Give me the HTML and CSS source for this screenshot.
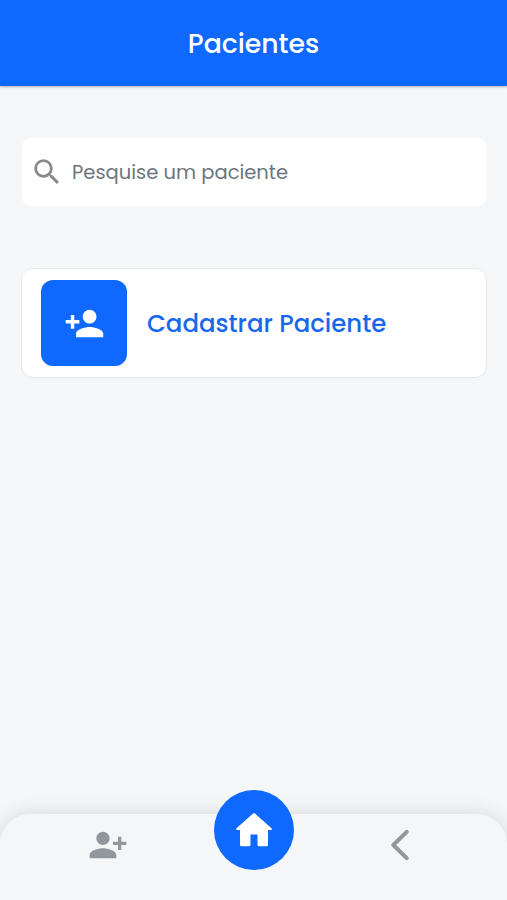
FILE: index.html
```html
<!DOCTYPE html>
<html lang="pt-BR">
<head>
    <meta charset="UTF-8">
    <meta name="viewport" content="width=device-width, initial-scale=1.0">
    <title>Pacientes</title>
    <link rel="stylesheet" href="styles.css">
</head>
<body>
    <div class="app">
        <header class="header">
            <h1>Pacientes</h1>
        </header>

        <main class="content">
            <label class="search">
                <svg class="search-icon" viewBox="0 0 24 24">
                    <path d="M15.5 14h-.79l-.28-.27A6.471 6.471 0 0 0 16 9.5 6.5 6.5 0 1 0 9.5 16c1.61 0 3.09-.59 4.23-1.57l.27.28v.79l5 4.99L20.49 19l-4.99-5zm-6 0C7.01 14 5 11.99 5 9.5S7.01 5 9.5 5 14 7.01 14 9.5 11.99 14 9.5 14z"/>
                </svg>
                <input type="text" placeholder="Pesquise um paciente">
            </label>

            <a class="card" href="#">
                <span class="card-icon">
                    <svg viewBox="0 0 24 24">
                        <path d="M15 12c2.21 0 4-1.79 4-4s-1.79-4-4-4-4 1.79-4 4 1.79 4 4 4zm-9-2V7H4v3H1v2h3v3h2v-3h3v-2H6zm9 4c-2.67 0-8 1.34-8 4v2h16v-2c0-2.66-5.33-4-8-4z"/>
                    </svg>
                </span>
                <span class="card-title">Cadastrar Paciente</span>
            </a>
        </main>

        <nav class="tabbar">
            <a class="tab" href="#">
                <svg class="tab-add" viewBox="0 0 24 24">
                    <path d="M13 8c0-2.21-1.79-4-4-4S5 5.79 5 8s1.79 4 4 4 4-1.79 4-4zm2 2v2h3v3h2v-3h3v-2h-3V7h-2v3h-3zM1 18v2h16v-2c0-2.66-5.33-4-8-4s-8 1.34-8 4z"/>
                </svg>
            </a>
            <a class="home" href="#">
                <svg viewBox="0 0 36 34">
                    <path d="M16.8.8.5 15.3c-.8.7-.5 1.7.5 1.7h3v14.8c0 .9.5 1.4 1.4 1.4h7.7c.9 0 1.4-.5 1.4-1.4V21.5h7v10.3c0 .9.5 1.4 1.4 1.4h7.7c.9 0 1.4-.5 1.4-1.4V17h3c1 0 1.3-1 .5-1.7L19.2.8c-.7-.6-1.7-.6-2.4 0z"/>
                </svg>
            </a>
            <a class="tab" href="#">
                <svg class="tab-back" viewBox="0 0 20 32">
                    <path d="M16.7 2.8 3.3 16l13.4 13.2"/>
                </svg>
            </a>
        </nav>
    </div>
</body>
</html>
```

FILE: styles.css
```css
* {
    box-sizing: border-box;
}

body {
    margin: 0;
    font-family: Poppins, Inter, "Open Sans", sans-serif;
    background: #f4f6f8;
}

a {
    text-decoration: none;
}

.app {
    display: flex;
    flex-direction: column;
    height: 100vh;
    overflow: hidden;
}

.header {
    display: flex;
    align-items: center;
    justify-content: center;
    height: 86px;
    padding-top: 2px;
    background: #0f69ff;
    box-shadow: 0 1px 2px rgba(0, 0, 0, 0.3);
}

.header h1 {
    margin: 0;
    color: #fff;
    font-size: 26.7px;
    font-weight: 500;
}

.content {
    flex: 1;
    padding: 52px 20px 0 21px;
}

.search {
    display: flex;
    align-items: center;
    gap: 8px;
    height: 68px;
    margin: 0 0 62px 1px;
    padding: 0 8px;
    background: #fff;
    border-radius: 9px;
}

.search-icon {
    flex: none;
    width: 34px;
    height: 34px;
    fill: #8a8a8a;
}

.search input {
    flex: 1;
    padding: 0;
    border: none;
    outline: none;
    background: none;
    font-family: inherit;
    font-size: 19.5px;
}

.search input::placeholder {
    color: #6c757d;
}

.card {
    display: flex;
    align-items: center;
    gap: 20px;
    height: 110px;
    padding: 0 19px;
    background: #fff;
    border: 1px solid #e6e8ea;
    border-radius: 12px;
}

.card-icon {
    display: flex;
    align-items: center;
    justify-content: center;
    width: 86px;
    height: 86px;
    background: #0f69ff;
    border-radius: 12px;
}

.card-icon svg {
    width: 41px;
    height: 41px;
    fill: #fff;
}

.card-title {
    color: #1768ec;
    font-size: 24.4px;
    font-weight: 500;
}

.tabbar {
    display: flex;
    justify-content: center;
    height: 86px;
    background: #f4f6f8;
    border-radius: 30px 30px 0 0;
    box-shadow: 0 0 20px rgba(0, 0, 0, 0.13);
}

.tab {
    display: flex;
    flex: 1;
    justify-content: center;
    height: 62px;
    align-items: center;
}

.tab-add {
    width: 40px;
    height: 40px;
    margin-left: 2px;
    fill: #92979e;
}

.tab-back {
    width: 20px;
    height: 32px;
    fill: none;
    stroke: #92979b;
    stroke-width: 4;
    stroke-linecap: round;
    stroke-linejoin: round;
}

.home {
    display: flex;
    align-items: center;
    justify-content: center;
    width: 80px;
    height: 80px;
    margin-top: -24px;
    background: #0f69ff;
    border-radius: 50%;
}

.home svg {
    width: 36px;
    height: 34px;
    fill: #fff;
}
```
